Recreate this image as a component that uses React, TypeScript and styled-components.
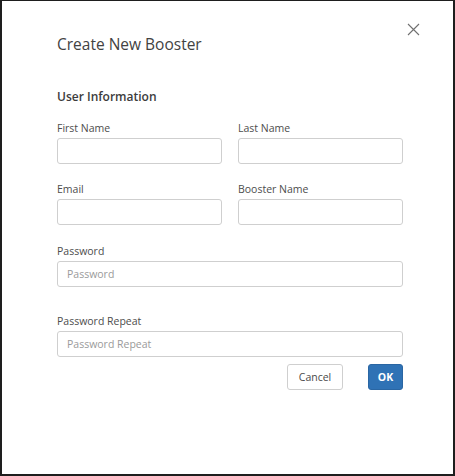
import React from "react";
import styled, { createGlobalStyle } from "styled-components";

const Global = createGlobalStyle`
  html, body { margin: 0; padding: 0; background: #1e1e1e; }
  * { box-sizing: border-box; }
  body { font-family: "Open Sans", "Liberation Sans", sans-serif; }
`;

const Frame = styled.div`
  width: 455px;
  height: 476px;
  border-style: solid;
  border-color: #1e1e1e;
  border-width: 1px 2px 2px 2px;
  background: #ffffff;
  position: relative;
`;

const Dialog = styled.div`
  padding: 32px 50px 0 55px;
  display: flex;
  flex-direction: column;
`;

const CloseButton = styled.button`
  position: absolute;
  top: 20px;
  right: 32px;
  width: 16px;
  height: 16px;
  padding: 0;
  border: none;
  background: transparent;
  display: flex;
  align-items: center;
  justify-content: center;
  cursor: pointer;
`;

const Title = styled.h1`
  margin: 0;
  font-size: 15.5px;
  line-height: 22px;
  font-weight: 400;
  color: #424242;
`;

const SectionTitle = styled.h2`
  margin: 33px 0 0;
  font-size: 12px;
  line-height: 18px;
  font-weight: 600;
  color: #3c3c3c;
`;

const Grid = styled.div`
  display: grid;
  grid-template-columns: 1fr 1fr;
  column-gap: 16px;
  row-gap: 18px;
  margin-top: 15px;
`;

const Field = styled.div<{ $full?: boolean; $gapTop?: number }>`
  display: flex;
  flex-direction: column;
  grid-column: ${(p) => (p.$full ? "1 / -1" : "auto")};
  margin-top: ${(p) => p.$gapTop ?? 0}px;
`;

const Label = styled.label`
  font-size: 10.5px;
  line-height: 14px;
  color: #4d4d4d;
  margin-bottom: 3px;
`;

const Input = styled.input`
  height: 26px;
  border: 1px solid #cfcfcf;
  border-radius: 3px;
  padding: 0 9px;
  font-family: inherit;
  font-size: 10.5px;
  color: #333;
  background: #fff;
  outline: none;
  &::placeholder { color: #9a9a9a; }
`;

const Actions = styled.div`
  display: flex;
  justify-content: flex-end;
  gap: 25px;
  margin-top: 7px;
`;

const Button = styled.button<{ $primary?: boolean }>`
  height: 26px;
  border-radius: 3px;
  font-family: inherit;
  font-size: 10.5px;
  padding: 0;
  cursor: pointer;
  width: ${(p) => (p.$primary ? "35px" : "56px")};
  font-weight: ${(p) => (p.$primary ? 700 : 400)};
  color: ${(p) => (p.$primary ? "#ffffff" : "#4a4a4a")};
  background: ${(p) => (p.$primary ? "#2f72b5" : "#ffffff")};
  border: 1px solid ${(p) => (p.$primary ? "#2a66a3" : "#cfcfcf")};
`;

export default function App() {
  return (
    <>
      <Global />
      <Frame>
        <CloseButton aria-label="Close">
          <svg width="13" height="13" viewBox="0 0 13 13">
            <path d="M1 1 L12 12 M12 1 L1 12" stroke="#707070" strokeWidth="1.1" fill="none" />
          </svg>
        </CloseButton>
        <Dialog>
          <Title>Create New Booster</Title>
          <SectionTitle>User Information</SectionTitle>
          <Grid>
            <Field>
              <Label>First Name</Label>
              <Input />
            </Field>
            <Field>
              <Label>Last Name</Label>
              <Input />
            </Field>
            <Field>
              <Label>Email</Label>
              <Input />
            </Field>
            <Field>
              <Label>Booster Name</Label>
              <Input />
            </Field>
            <Field $full $gapTop={1}>
              <Label>Password</Label>
              <Input type="password" placeholder="Password" />
            </Field>
            <Field $full $gapTop={9}>
              <Label>Password Repeat</Label>
              <Input type="password" placeholder="Password Repeat" />
            </Field>
          </Grid>
          <Actions>
            <Button>Cancel</Button>
            <Button $primary>OK</Button>
          </Actions>
        </Dialog>
      </Frame>
    </>
  );
}
